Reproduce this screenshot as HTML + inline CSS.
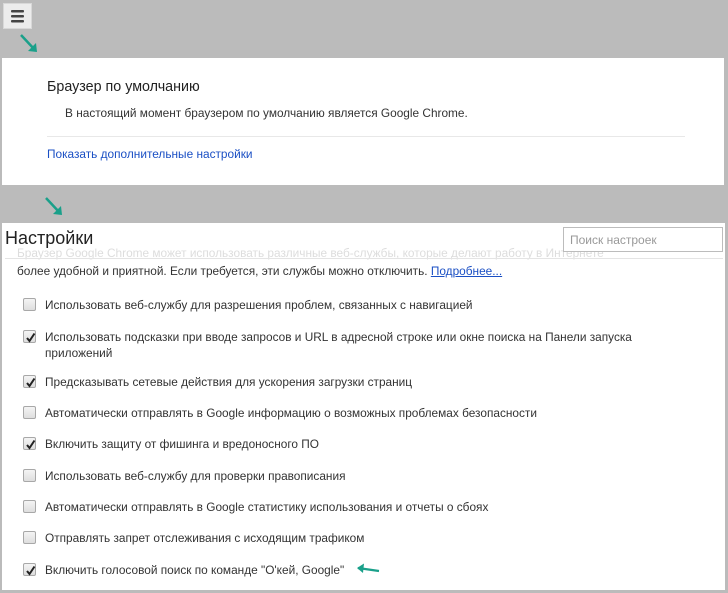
<!DOCTYPE html>
<html><head><meta charset="utf-8">
<style>
*{margin:0;padding:0;box-sizing:border-box}
body{width:728px;height:593px;background:#bbbbbb;position:relative;overflow:hidden;font-family:"Liberation Sans","Noto Sans CJK SC",sans-serif;font-size:11.85px;color:#333}
.abs{position:absolute;white-space:nowrap}
.panel{position:absolute;background:#fff}
.cb{position:absolute;left:23px;width:13px;height:13px;border:1px solid #a8a8a8;border-radius:2px;background:linear-gradient(#f4f4f4,#dedede)}
.cb svg{position:absolute;left:1px;top:1px}
.lbl{position:absolute;left:45px;white-space:nowrap;line-height:16px}
a{color:#1a4fc4}
</style></head><body>
<div class="abs" style="left:3px;top:3px;width:29px;height:26px;background:#ececec;border:1px solid #d8d8d8"></div>
<svg class="abs" style="left:11px;top:9px" width="13" height="14"><rect x="0" y="1" width="13" height="2.5" rx="1" fill="#444"/><rect x="0" y="6" width="13" height="2.5" rx="1" fill="#444"/><rect x="0" y="11" width="13" height="2.5" rx="1" fill="#444"/></svg>
<svg class="abs" style="left:18px;top:33px" width="24" height="22"><path d="M3 2 L17 17" stroke="#1aa08a" stroke-width="2.5" fill="none"/><path d="M10 18 L19 19 L18 10 Z" fill="#1aa08a"/></svg>

<div class="panel" style="left:2px;top:58px;width:722px;height:127px"></div>
<div class="abs" style="left:47px;top:79px;font-size:14.3px;color:#222">Браузер по умолчанию</div>
<div class="abs" style="left:65px;top:106px;color:#333">В настоящий момент браузером по умолчанию является Google Chrome.</div>
<div class="abs" style="left:47px;top:136px;width:638px;height:1px;background:#e8e8e8"></div>
<div class="abs" style="left:47px;top:147px;color:#1a4fc4">Показать дополнительные настройки</div>

<svg class="abs" style="left:43px;top:196px" width="24" height="22"><path d="M3 2 L17 17" stroke="#1aa08a" stroke-width="2.5" fill="none"/><path d="M10 18 L19 19 L18 10 Z" fill="#1aa08a"/></svg>

<div class="panel" style="left:2px;top:223px;width:723px;height:367px"></div>
<div class="abs" style="left:17px;top:246px;color:#ddd">Браузер Google Chrome может использовать различные веб-службы, которые делают работу в Интернете</div>
<div class="abs" style="left:5px;top:228px;font-size:18px;color:#222">Настройки</div>
<div class="abs" style="left:5px;top:258px;width:718px;height:1px;background:#e4e4e4"></div>
<div class="abs" style="left:563px;top:227px;width:160px;height:25px;border:1px solid #bcbcbc;background:#fff;padding:5px 0 0 6px;color:#999;font-size:12px">Поиск настроек</div>
<div class="abs" style="left:17px;top:264px">более удобной и приятной. Если требуется, эти службы можно отключить. <a style="text-decoration:underline">Подробнее...</a></div>

<div class="cb" style="top:298px"></div><div class="lbl" style="top:297px">Использовать веб-службу для разрешения проблем, связанных с навигацией</div>
<div class="cb" style="top:330px"><svg width="11" height="11"><path d="M2 6 L4.5 9 L9.5 1.5" stroke="#222" stroke-width="2" fill="none"/></svg></div><div class="lbl" style="top:329px">Использовать подсказки при вводе запросов и URL в адресной строке или окне поиска на Панели запуска<br>приложений</div>
<div class="cb" style="top:375px"><svg width="11" height="11"><path d="M2 6 L4.5 9 L9.5 1.5" stroke="#222" stroke-width="2" fill="none"/></svg></div><div class="lbl" style="top:374px">Предсказывать сетевые действия для ускорения загрузки страниц</div>
<div class="cb" style="top:406px"></div><div class="lbl" style="top:405px">Автоматически отправлять в Google информацию о возможных проблемах безопасности</div>
<div class="cb" style="top:437px"><svg width="11" height="11"><path d="M2 6 L4.5 9 L9.5 1.5" stroke="#222" stroke-width="2" fill="none"/></svg></div><div class="lbl" style="top:436px">Включить защиту от фишинга и вредоносного ПО</div>
<div class="cb" style="top:469px"></div><div class="lbl" style="top:468px">Использовать веб-службу для проверки правописания</div>
<div class="cb" style="top:500px"></div><div class="lbl" style="top:499px">Автоматически отправлять в Google статистику использования и отчеты о сбоях</div>
<div class="cb" style="top:531px"></div><div class="lbl" style="top:530px">Отправлять запрет отслеживания с исходящим трафиком</div>
<div class="cb" style="top:563px"><svg width="11" height="11"><path d="M2 6 L4.5 9 L9.5 1.5" stroke="#222" stroke-width="2" fill="none"/></svg></div><div class="lbl" style="top:562px">Включить голосовой поиск по команде "О'кей, Google"</div>
<svg class="abs" style="left:355px;top:563px" width="26" height="12"><path d="M3 5 L24 8" stroke="#1aa08a" stroke-width="2.2" fill="none"/><path d="M2 5 L9 0.5 L8 10 Z" fill="#1aa08a"/></svg>
</body></html>
